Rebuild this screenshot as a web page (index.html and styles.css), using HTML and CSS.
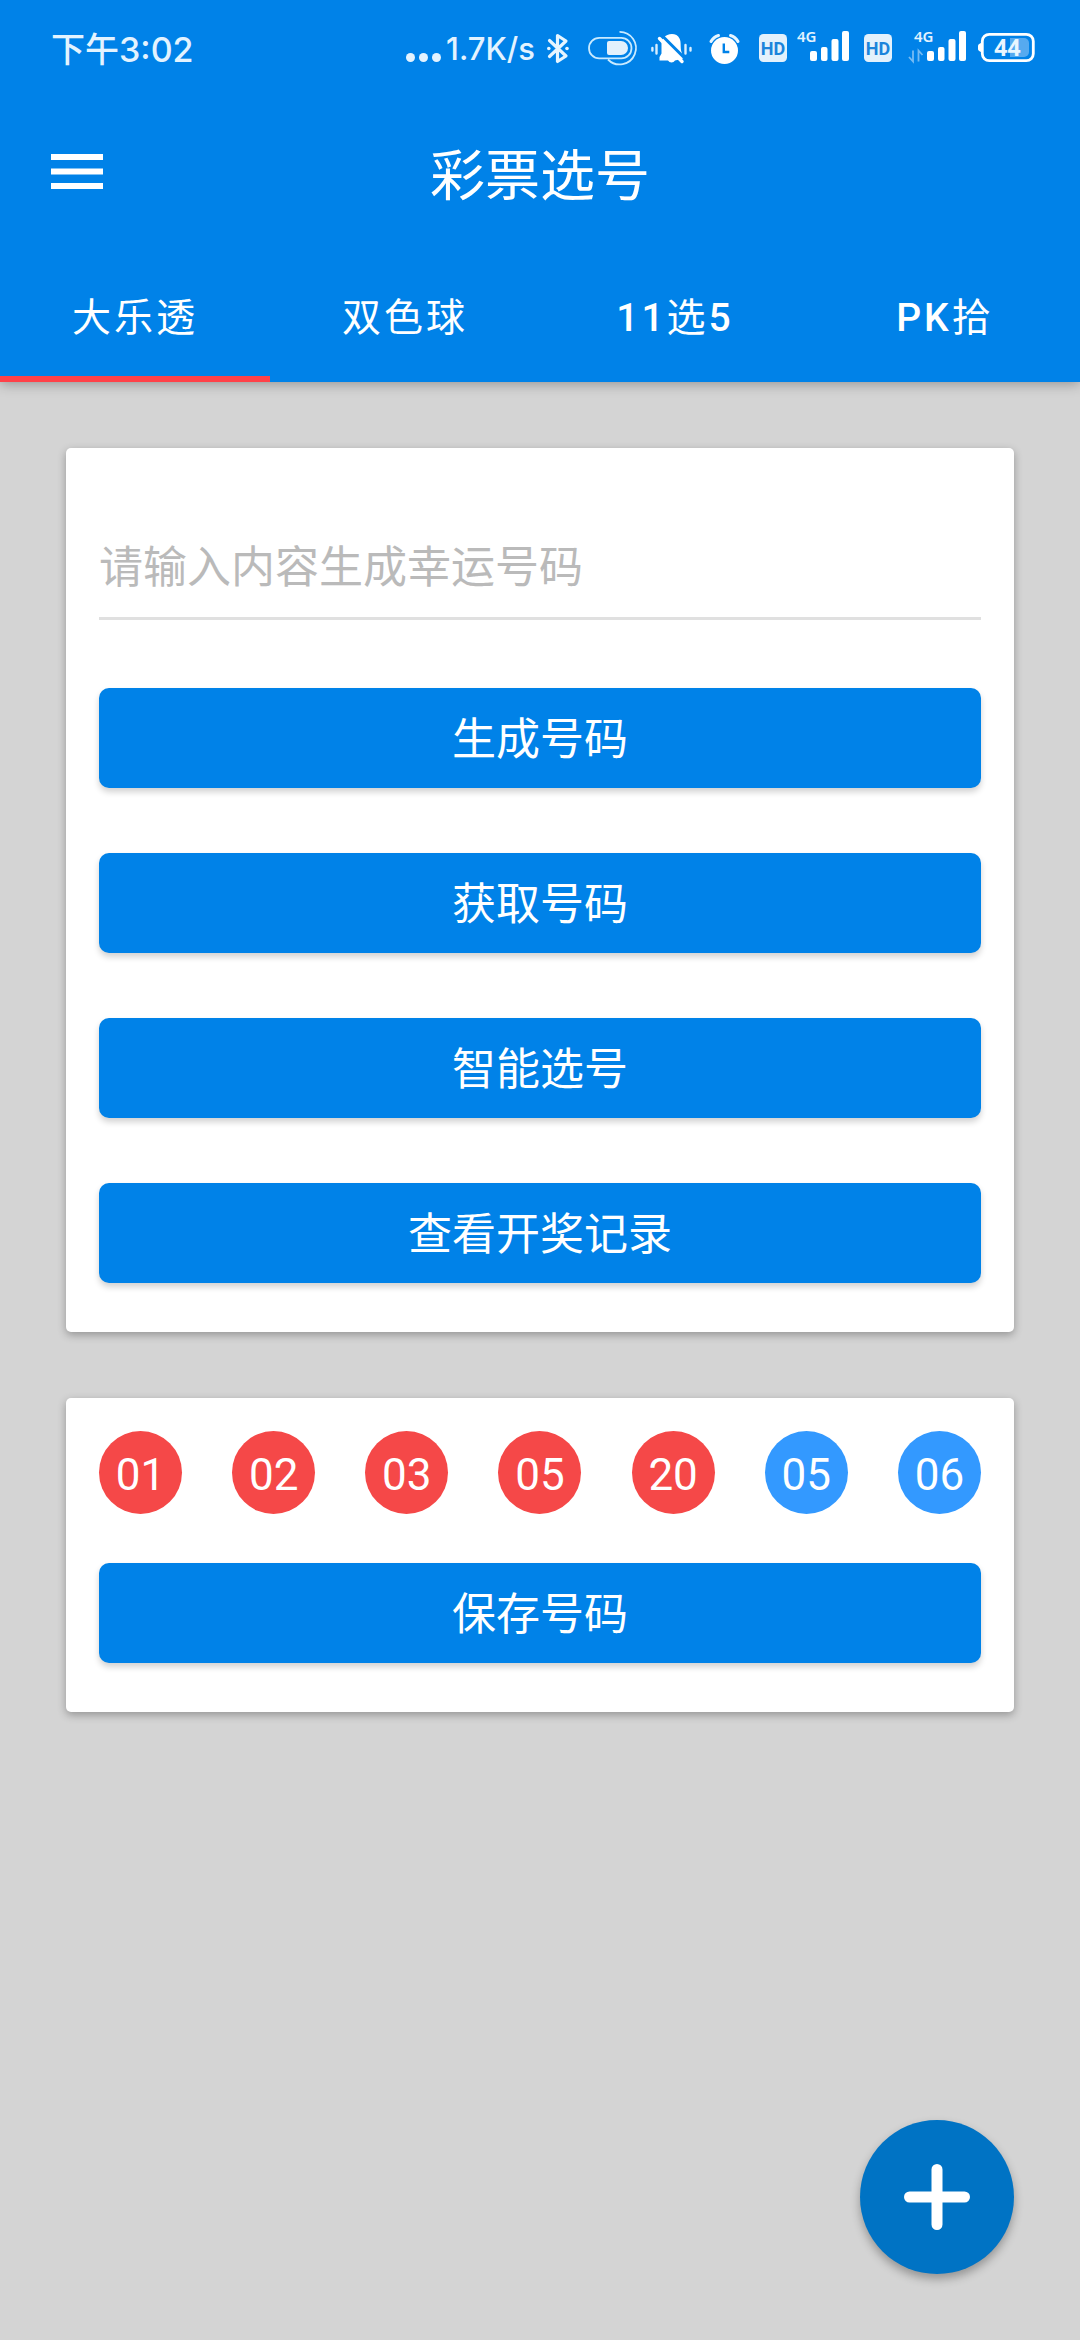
FILE: index.html
```html
<!DOCTYPE html>
<html lang="zh-CN">
<head>
<meta charset="utf-8">
<meta name="viewport" content="width=device-width, initial-scale=1">
<title>彩票选号</title>
<link rel="stylesheet" href="styles.css">
</head>
<body>
<header class="header">
  <div class="status">
    <span class="status-time">下午3:02</span>
    <div class="status-icons">
      <svg class="dots" width="36" height="40" viewBox="406 29 36 40" aria-hidden="true"><g fill="#e3f3ff"><circle cx="410.500" cy="57.500" r="4.500"/><circle cx="423.500" cy="57.500" r="4.500"/><circle cx="436.500" cy="57.500" r="4.500"/></g></svg>
      <span class="status-speed">1.7K/s</span>
      <svg width="30" height="40" viewBox="543 29 30 40" aria-hidden="true"><path d="M549.5 40.500L566 56L557.500 61.500V35.500L566 41L549.500 56.500" fill="none" stroke="#e6f5ff" stroke-width="3.200" stroke-linejoin="round" stroke-linecap="round"/><circle cx="548.800" cy="48.500" r="1.800" fill="#e6f5ff"/><circle cx="567" cy="48.500" r="1.800" fill="#e6f5ff"/></svg>
      <svg width="60" height="40" viewBox="581 29 60 40" aria-hidden="true"><g fill="none" stroke="#c8eaff" stroke-width="1.800"><rect x="589" y="37.900" width="42.500" height="20.500" rx="10.250"/><path d="M619.500 31.800A16.300 16.300 0 1 1 608 59.500"/></g><path d="M609 41h12a7 7 0 0 1 0 14h-12a2 2 0 0 1-2-2v-10a2 2 0 0 1 2-2z" fill="#e3f1fc"/></svg>
      <svg width="45" height="40" viewBox="649 29 45 40" aria-hidden="true"><path d="M664 37.500C667 33 677 32 679.500 38.500C681.500 42.500 680 47 681.500 52L683.500 58.500L675 60.500A4.200 4.200 0 0 1 668 60.500H659.500V57L661.500 53.500V44C661.500 41 662 39.500 664 37.500z" fill="#fff"/><path d="M661 34.500L686 59.500" stroke="#0082e8" stroke-width="3"/><path d="M659.500 38.500L682 61.500" stroke="#fff" stroke-width="3.400" stroke-linecap="round"/><g stroke="#d9eeff" stroke-width="2.400" stroke-linecap="round"><path d="M652.400 48v2.500M656.500 45v8.500M685.500 45v8.500M690.500 48v2.500"/></g></svg>
      <svg width="45" height="40" viewBox="702 29 45 40" aria-hidden="true"><circle cx="724.500" cy="50.500" r="13.500" fill="#fff"/><path d="M711 41.500Q713.500 37 718.500 35.500M730.500 35.500Q735.500 37 738 41.500" fill="none" stroke="#e6f5ff" stroke-width="3" stroke-linecap="round"/><path d="M723.800 43.500v8.500h5.500" fill="none" stroke="#0082e8" stroke-width="2.400"/></svg>
      <svg width="34" height="40" viewBox="755 29 34 40" role="img" aria-label="HD"><rect x="759" y="34" width="28" height="28" rx="4.500" fill="#e3f1fc"/><text class="hd" x="773" y="55" text-anchor="middle">HD</text></svg>
      <svg width="55" height="56" viewBox="797 21 55 56" role="img" aria-label="4G"><text class="net" x="797" y="42">4G</text><g fill="#fff"><rect x="810" y="51" width="7" height="10" rx="2"/><rect x="821" y="47" width="6.500" height="14" rx="2"/><rect x="831.500" y="39" width="7" height="22" rx="2"/><rect x="842" y="31" width="7" height="30" rx="2"/></g></svg>
      <svg width="36" height="40" viewBox="860 29 36 40" role="img" aria-label="HD"><rect x="864" y="34" width="28" height="28" rx="4.500" fill="#e3f1fc"/><text class="hd" x="878" y="55" text-anchor="middle">HD</text></svg>
      <svg width="66" height="56" viewBox="904 21 66 56" role="img" aria-label="4G"><text class="net" x="914" y="42">4G</text><path d="M909 57L913 61.500V50.500M918.500 61.500V50.500L922.500 55" fill="none" stroke="#76bbf3" stroke-width="1.800"/><g fill="#fff"><rect x="927" y="51" width="7" height="10" rx="2"/><rect x="938" y="47" width="6.500" height="14" rx="2"/><rect x="948.500" y="39" width="7" height="22" rx="2"/><rect x="959" y="31" width="7" height="30" rx="2"/></g></svg>
      <svg width="58" height="40" viewBox="978 29 58 40" role="img" aria-label="44%"><rect x="982.300" y="34.300" width="51" height="26.400" rx="7" fill="none" stroke="#fff" stroke-width="2.800"/><path d="M982 43v9a4.500 4.500 0 0 1 0-9z" fill="#fff"/><path d="M1010 38h14a5 5 0 0 1 5 5v9a5 5 0 0 1-5 5h-14z" fill="#56aaf0"/><text class="level" x="1007.500" y="56" text-anchor="middle">44</text></svg>
    </div>
  </div>
  <div class="appbar">
    <button class="menu" type="button" aria-label="菜单"><svg width="52" height="36" viewBox="0 0 52 36"><path d="M0 0h52v6H0zM0 14.500h52v6H0zM0 29h52v6H0z" fill="#fff"/></svg></button>
    <h1 class="title">彩票选号</h1>
  </div>
  <nav class="tabs">
    <a class="tab tab-active" href="#dlt" aria-current="page">大乐透</a>
    <a class="tab" href="#ssq">双色球</a>
    <a class="tab" href="#x5"><span class="latin">11</span>选<span class="latin">5</span></a>
    <a class="tab" href="#pk10"><span class="latin">PK</span>拾</a>
  </nav>
</header>
<main class="content">
  <form class="card card-form">
    <input class="field" type="text" placeholder="请输入内容生成幸运号码" aria-label="请输入内容生成幸运号码">
    <div class="actions">
      <button class="btn" type="button">生成号码</button>
      <button class="btn" type="button">获取号码</button>
      <button class="btn" type="button">智能选号</button>
      <button class="btn" type="button">查看开奖记录</button>
    </div>
  </form>
  <section class="card card-result">
    <ul class="balls">
      <li class="ball">01</li>
      <li class="ball">02</li>
      <li class="ball">03</li>
      <li class="ball">05</li>
      <li class="ball">20</li>
      <li class="ball ball-blue">05</li>
      <li class="ball ball-blue">06</li>
    </ul>
    <button class="btn" type="button">保存号码</button>
  </section>
</main>
<button class="fab" type="button" aria-label="添加"><svg width="66" height="66" viewBox="0 0 66 66"><path d="M33 5.500v55M5.500 33h55" stroke="#fff" stroke-width="11" stroke-linecap="round"/></svg></button>
</body>
</html>
```
FILE: styles.css
```css
* {
  box-sizing: border-box;
}

body {
  margin: 0;
  min-height: 100vh;
  background: #d4d4d4;
  font-family: Roboto, "Noto Sans CJK SC", sans-serif;
  color: #fff;
}

button {
  border: 0;
  padding: 0;
  font: inherit;
  color: inherit;
  cursor: pointer;
}

svg {
  display: block;
}

.header {
  background: #0082e8;
  box-shadow: 0 2px 12px rgba(0, 0, 0, 0.3);
}

/* Status bar */
.status {
  display: flex;
  align-items: center;
  justify-content: space-between;
  height: 98px;
  padding: 0 44px 0 51px;
  font-family: Inter, "Noto Sans CJK SC", sans-serif;
  font-weight: 500;
  color: #e3f3ff;
}

.status-time {
  padding-bottom: 4px;
  font-size: 34px;
}

.status-icons {
  display: flex;
  align-items: center;
  gap: 8px;
}

.dots {
  margin-right: -4px;
}

.status-speed {
  font-size: 31px;
  line-height: 40px;
}

.hd {
  font: 700 18px Roboto, sans-serif;
  fill: #1b84db;
}

.net {
  font: 600 15px "Noto Sans", sans-serif;
  fill: #e3f3ff;
}

.level {
  font: 700 23px "Noto Sans", sans-serif;
  fill: #e9f6ff;
}

/* App bar */
.appbar {
  display: grid;
  grid-template-columns: 52px 1fr 52px;
  align-items: center;
  height: 154px;
  padding: 0 51px;
}

.menu {
  padding-bottom: 6px;
  background: none;
}

.title {
  margin: 0;
  padding-top: 2px;
  text-align: center;
  font-size: 55px;
  font-weight: 400;
  line-height: 66px;
}

/* Tabs */
.tabs {
  display: grid;
  grid-template-columns: repeat(4, 1fr);
}

.tab {
  height: 130px;
  padding-top: 4px;
  border-bottom: 6px solid transparent;
  font-size: 39px;
  line-height: 124px;
  letter-spacing: 3px;
  text-align: center;
  color: #fff;
  text-decoration: none;
}

.tab-active {
  border-bottom-color: #ff4148;
}

.latin {
  font-weight: 500;
}

/* Cards */
.content {
  display: flex;
  flex-direction: column;
  gap: 66px;
  padding: 66px;
}

.card {
  display: flex;
  flex-direction: column;
  padding: 33px 33px 49px;
  border-radius: 5px;
  background: #fff;
  box-shadow: 0 3px 8px rgba(0, 0, 0, 0.3);
}

.card-form {
  gap: 68px;
  padding-top: 66px;
}

.card-result {
  gap: 49px;
}

.field {
  width: 100%;
  height: 106px;
  padding: 4px 0 0;
  border: 0;
  border-bottom: 3px solid #e0e0e0;
  background: none;
  font: inherit;
  font-size: 44px;
  color: #333;
  outline: 0;
}

.field::placeholder {
  color: #bababa;
  opacity: 1;
}

.actions {
  display: flex;
  flex-direction: column;
  gap: 65px;
}

.btn {
  height: 100px;
  padding-bottom: 4px;
  border-radius: 10px;
  background: #0082e8;
  box-shadow: 0 4px 6px rgba(0, 0, 0, 0.18);
  font-size: 44px;
}

.balls {
  display: flex;
  justify-content: space-between;
  margin: 0;
  padding: 0;
  list-style: none;
}

.ball {
  width: 83px;
  height: 83px;
  border-radius: 50%;
  background: #f54848;
  font-size: 44px;
  line-height: 88px;
  text-align: center;
}

.ball-blue {
  background: #3399ff;
}

/* Floating action button */
.fab {
  position: fixed;
  right: 66px;
  bottom: 66px;
  display: grid;
  place-items: center;
  width: 154px;
  height: 154px;
  border-radius: 50%;
  background: #0073c4;
  box-shadow: 0 5px 10px rgba(0, 0, 0, 0.3);
}
```
